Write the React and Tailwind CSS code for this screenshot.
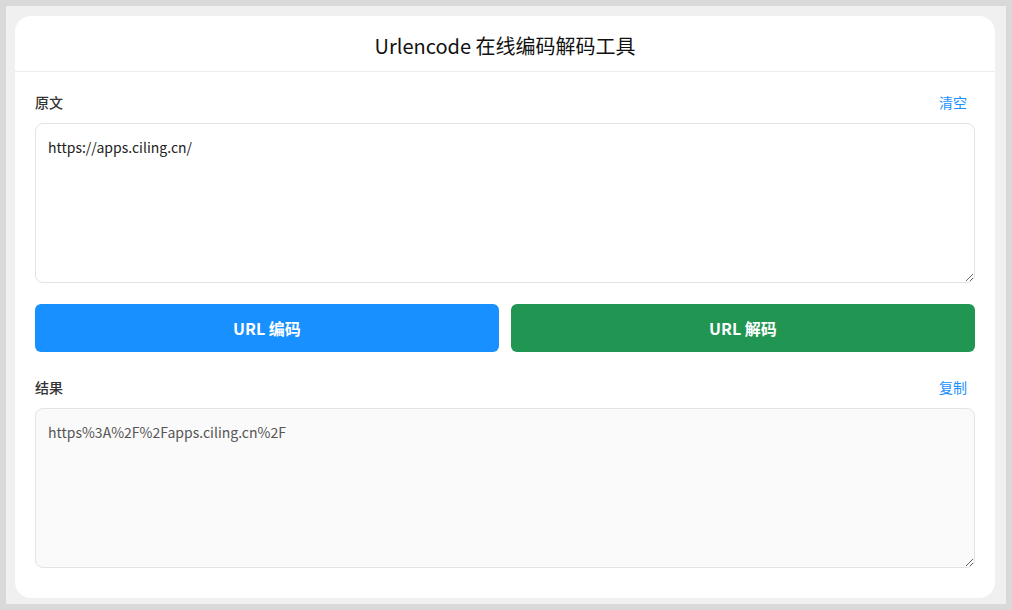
import { useState } from "react";

function Field({ label, action, onAction, value, onChange, readOnly }) {
  return (
    <div>
      <div className="flex items-center justify-between h-5 mb-[11px]">
        <span className="text-sm font-medium text-[#333]">{label}</span>
        <button
          type="button"
          onClick={onAction}
          className="text-sm text-[#1890ff] px-2 leading-5 cursor-pointer"
        >
          {action}
        </button>
      </div>
      <textarea
        value={value}
        onChange={onChange}
        readOnly={readOnly}
        className={
          "block w-full h-[160px] rounded-lg border border-[#e3e3e3] px-3 py-[13px] text-sm leading-5 outline-none " +
          (readOnly ? "bg-[#fafafa] text-[#555]" : "bg-white text-[#222]")
        }
      />
    </div>
  );
}

export default function App() {
  const [input, setInput] = useState("https://apps.ciling.cn/");
  const [output, setOutput] = useState("https%3A%2F%2Fapps.ciling.cn%2F");

  const encode = () => setOutput(encodeURIComponent(input));
  const decode = () => {
    try {
      setOutput(decodeURIComponent(input));
    } catch (e) {
      setOutput("解码失败");
    }
  };

  return (
    <div
      className="w-full h-[610px] border-[6px] border-[#d9d9d9] bg-[#f0f0f0] pl-[9px] pr-[11px] pt-[10px] pb-[5px]"
      style={{ fontFamily: '"Noto Sans CJK SC", "Noto Sans", sans-serif' }}
    >
      <div className="h-[582px] bg-white rounded-2xl flex flex-col">
        {/* header */}
        <div className="h-[56px] flex items-center justify-center border-b border-[#ececec]">
          <h1 className="text-xl text-[#111] pt-[4px]">Urlencode 在线编码解码工具</h1>
        </div>

        <div className="px-5 pt-5">
          <Field
            label="原文"
            action="清空"
            onAction={() => setInput("")}
            value={input}
            onChange={(e) => setInput(e.target.value)}
          />

          <div className="grid grid-cols-2 gap-3 mt-[21px] mb-[25px]">
            <button
              type="button"
              onClick={encode}
              className="h-12 rounded-md bg-[#1890ff] text-white font-bold text-base"
            >
              URL 编码
            </button>
            <button
              type="button"
              onClick={decode}
              className="h-12 rounded-md bg-[#219653] text-white font-bold text-base"
            >
              URL 解码
            </button>
          </div>

          <Field
            label="结果"
            action="复制"
            onAction={() => navigator.clipboard && navigator.clipboard.writeText(output)}
            value={output}
            readOnly
          />
        </div>
      </div>
    </div>
  );
}
